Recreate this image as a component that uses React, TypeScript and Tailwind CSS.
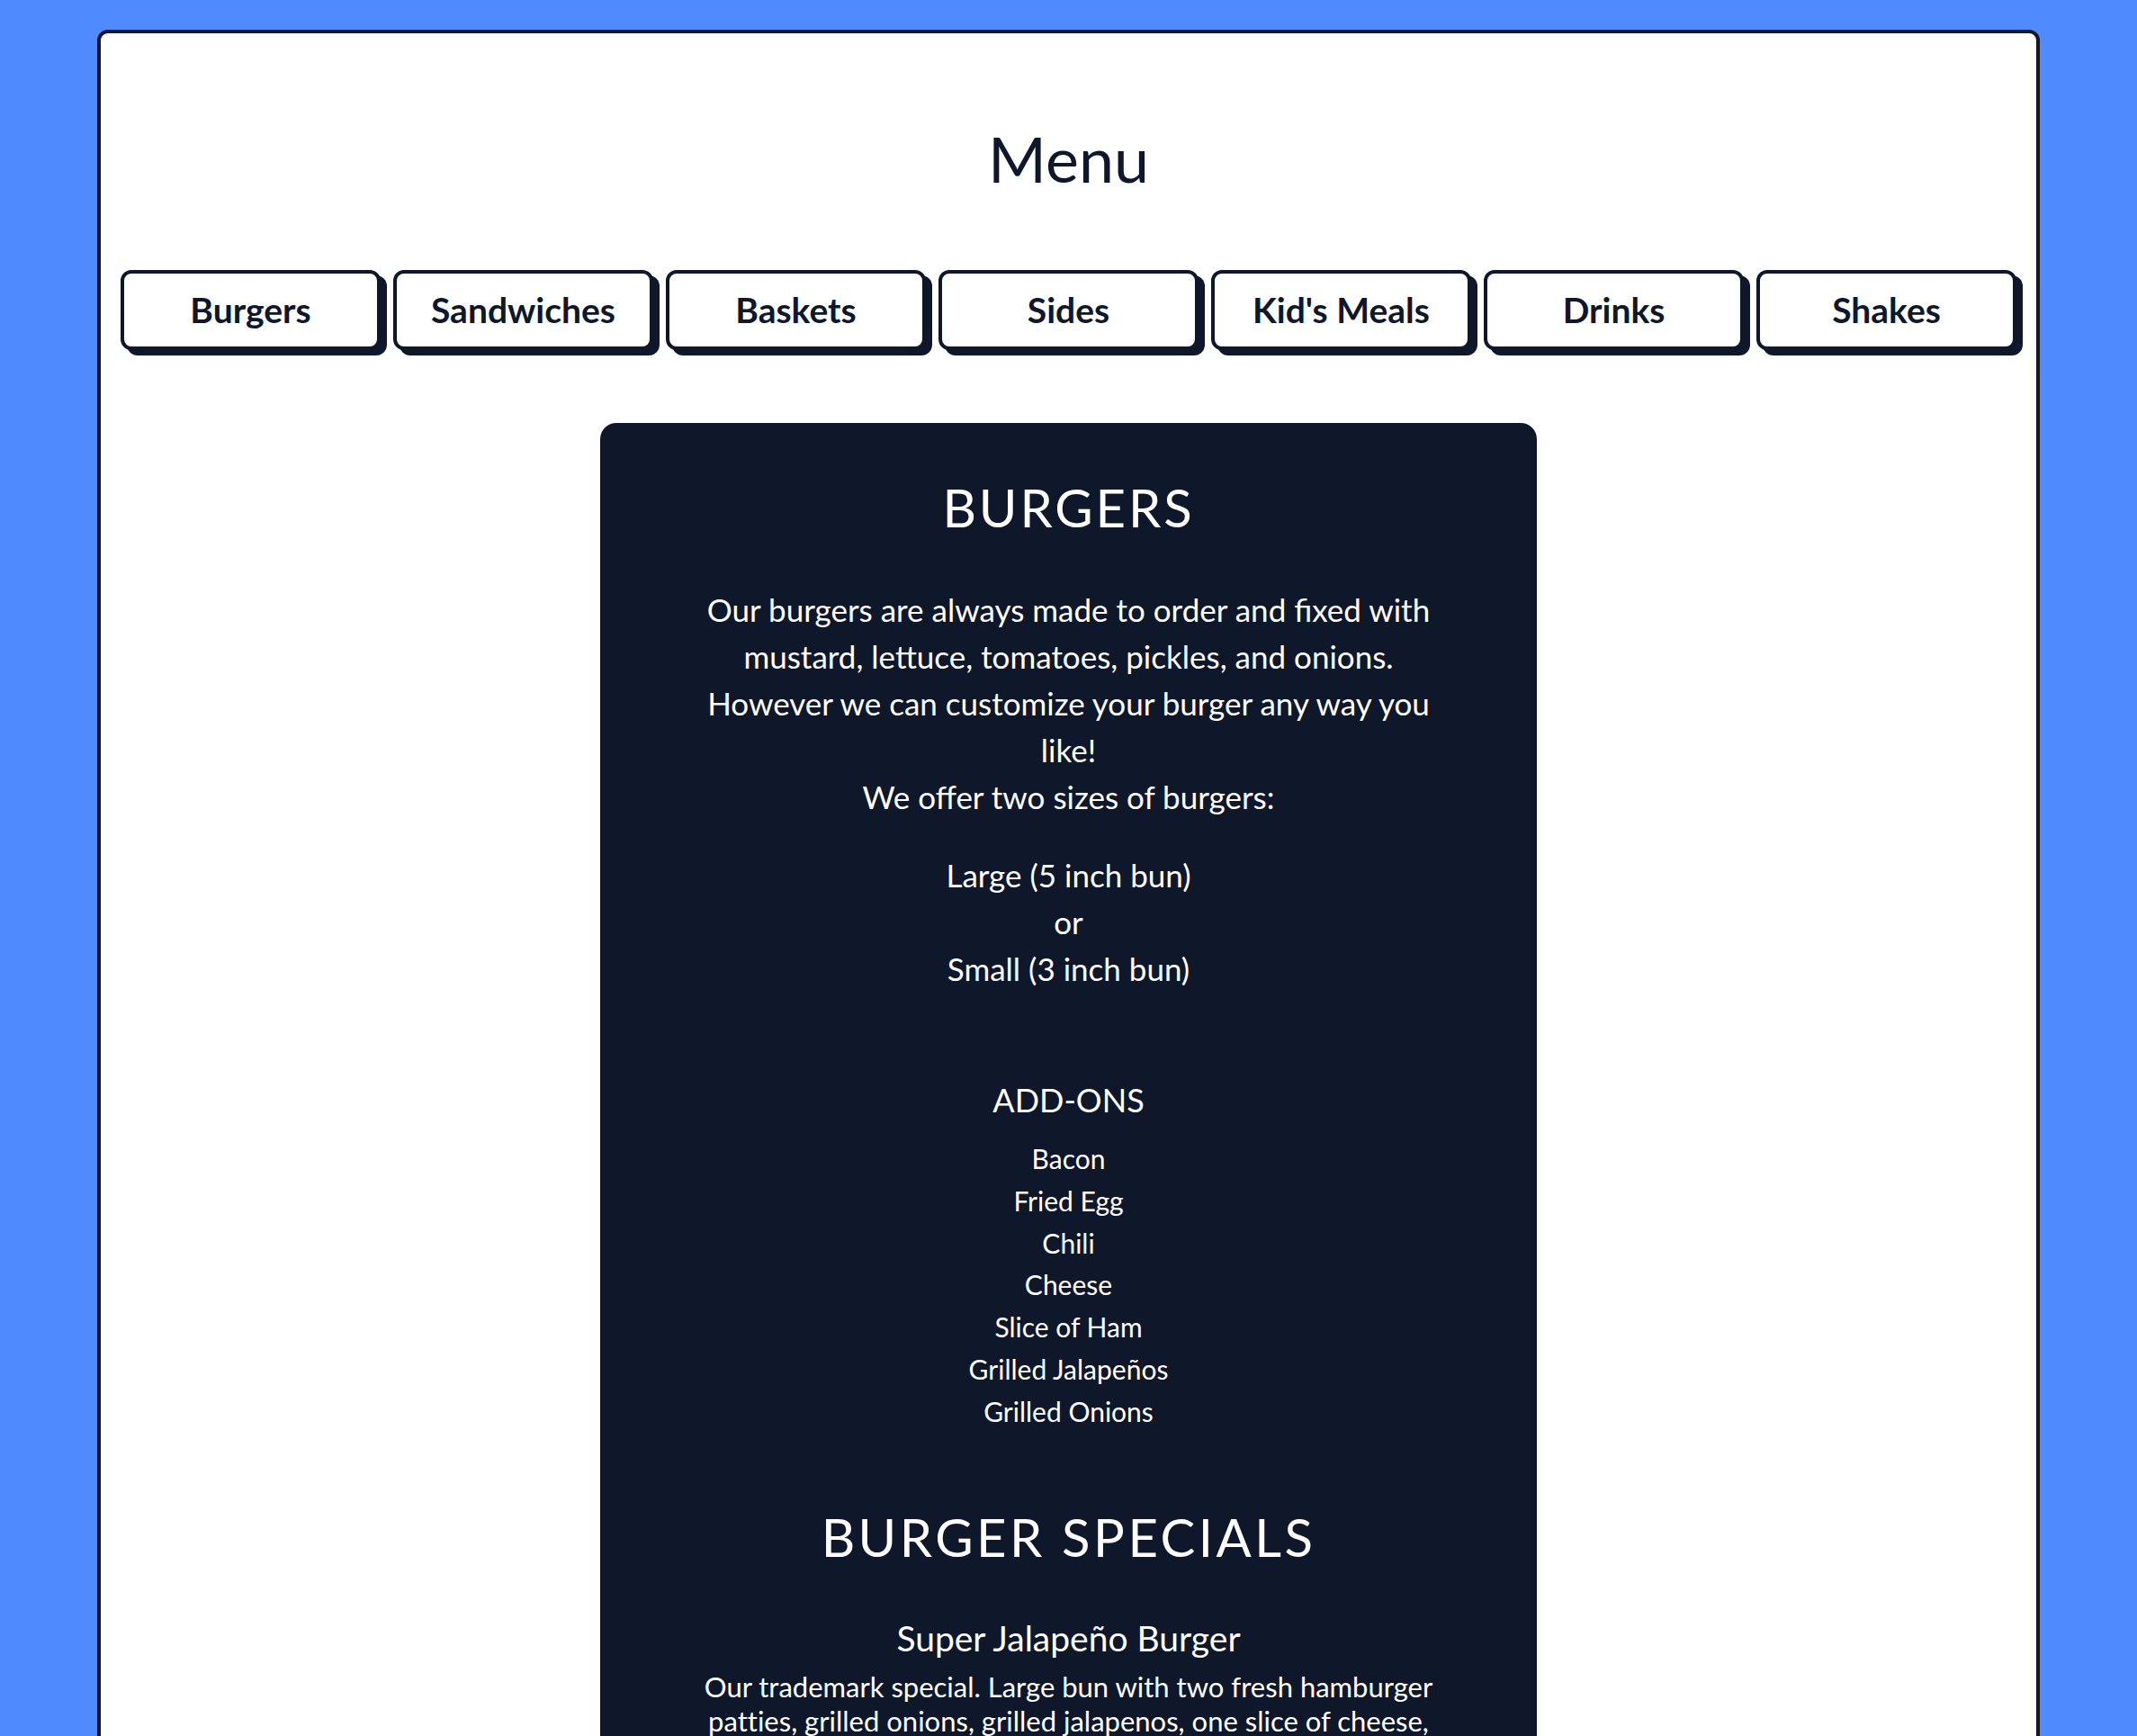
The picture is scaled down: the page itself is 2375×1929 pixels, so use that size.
export default function App() {
  const tabs = ["Burgers", "Sandwiches", "Baskets", "Sides", "Kid's Meals", "Drinks", "Shakes"];
  const addons = [
    "Bacon",
    "Fried Egg",
    "Chili",
    "Cheese",
    "Slice of Ham",
    "Grilled Jalapeños",
    "Grilled Onions",
  ];
  return (
    <div className="min-h-screen bg-[#4f8bff] px-[108px] pt-[33px] font-[Lato,sans-serif]">
      <div className="rounded-[12px] border-[4px] border-[#0f172a] bg-white px-[22px] pt-[103px] pb-[80px]">
        <h1 className="text-center text-[70px] leading-[72px] font-normal text-[#0f172a]">Menu</h1>
        <nav className="mt-[88px] flex gap-[14px]">
          {tabs.map((t) => (
            <button
              key={t}
              className="h-[89px] min-w-0 flex-1 rounded-[12px] border-[4px] border-[#0f172a] bg-white text-[39px] font-bold text-[#0f172a] shadow-[7px_6px_0_#0f172a]"
            >
              {t}
            </button>
          ))}
        </nav>
        <section className="mx-auto mt-[81px] w-[1041px] rounded-[18px] bg-[#0f172a] pt-[59px] pb-[80px] text-center text-white">
          <h2 className="text-[58px] leading-[70px] font-normal tracking-[0.05em]">BURGERS</h2>
          <p className="mt-[52px] text-[35px] leading-[52px]">
            <span className="block">Our burgers are always made to order and fixed with</span>
            <span className="block">mustard, lettuce, tomatoes, pickles, and onions.</span>
            <span className="block">However we can customize your burger any way you</span>
            <span className="block">like!</span>
            <span className="block">We offer two sizes of burgers:</span>
          </p>
          <p className="mt-[35px] text-[35px] leading-[52px]">
            <span className="block">Large (5 inch bun)</span>
            <span className="block">or</span>
            <span className="block">Small (3 inch bun)</span>
          </p>
          <h3 className="mt-[98px] text-[36px] leading-[44px] font-normal">ADD-ONS</h3>
          <ul className="mt-[20px] text-[30px] leading-[46.8px]">
            {addons.map((a) => (
              <li key={a}>{a}</li>
            ))}
          </ul>
          <h2 className="mt-[81px] text-[58px] leading-[70px] font-normal tracking-[0.06em]">BURGER SPECIALS</h2>
          <h4 className="mt-[55px] text-[39px] leading-[44px] font-normal">Super Jalapeño Burger</h4>
          <p className="mt-[13px] text-[31px] leading-[38px] [font-variant-ligatures:no-common-ligatures]">
            <span className="block">Our trademark special. Large bun with two fresh hamburger</span>
            <span className="block">patties, grilled onions, grilled jalapenos, one slice of cheese,</span>
            <span className="block">and all the regular fixings.</span>
          </p>
        </section>
      </div>
    </div>
  );
}
